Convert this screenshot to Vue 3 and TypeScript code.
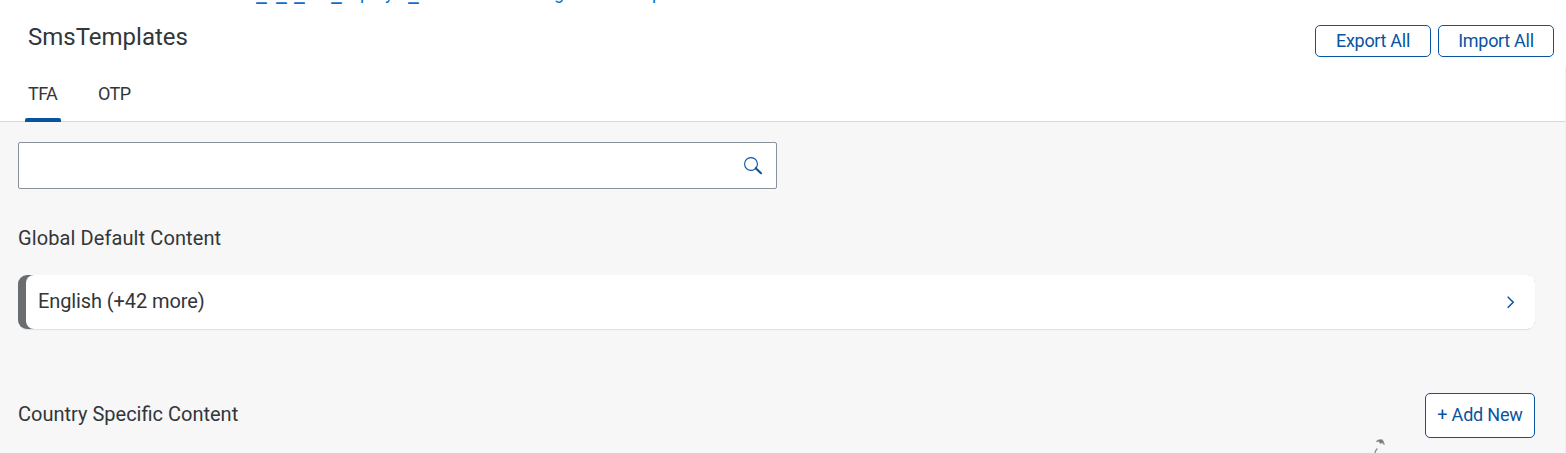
<script setup lang="ts">
import { ref } from 'vue'

const tabs: string[] = ['TFA', 'OTP']
const activeTab = ref<string>('TFA')
const query = ref<string>('')
</script>

<template>
  <main class="page">
    <header class="header">
      <svg class="crumb" width="700" height="8" viewBox="0 0 700 8">
        <text class="marks" y="1.7" x="256 276 294 331 408">_____</text>
        <text y="-1" x="360 385 554 652">pygp</text>
      </svg>
      <div class="title-row">
        <h1><span>SmsTemplates</span></h1>
        <div class="actions">
          <button class="btn"><span>Export All</span></button>
          <button class="btn"><span>Import All</span></button>
        </div>
      </div>
      <nav class="tabs">
        <button
          v-for="tab in tabs"
          :key="tab"
          class="tab"
          :class="{ active: tab === activeTab }"
          @click="activeTab = tab"
        >
          {{ tab }}
        </button>
      </nav>
    </header>
    <section class="content">
      <label class="search">
        <input v-model="query" type="text" aria-label="Search" />
        <svg width="20" height="20" viewBox="0 0 20 20">
          <circle cx="8" cy="8" r="6.4" fill="none" stroke="#0854a0" stroke-width="1.1" />
          <path d="M12.7 12.2L18 17.2" stroke="#0854a0" stroke-width="2.1" fill="none" stroke-linecap="round" />
        </svg>
      </label>
      <h2 class="global"><span>Global Default Content</span></h2>
      <div class="bar">
        <div class="card">
          <span>English (+42 more)</span>
          <svg width="10" height="14" viewBox="0 0 10 14">
            <path d="M1.7 1.8L7.2 7.3L1.7 12.8" stroke="#0854a0" stroke-width="1.5" fill="none" />
          </svg>
        </div>
      </div>
      <div class="country">
        <h2><span>Country Specific Content</span></h2>
        <button class="btn add"><span>+ Add New</span></button>
      </div>
      <svg class="pointer" width="14" height="16" viewBox="0 0 14 16">
        <path d="M2 3.6L4 2L8 1.5L9.5 3.5L10.4 7L8 4.6L6.6 5.8L5 3.6Z" fill="#777" stroke="#999" stroke-width=".7" />
        <path d="M3.4 10.5Q1.5 12 1 15" fill="none" stroke="#888" stroke-width="1.3" />
      </svg>
    </section>
    <div class="edge"></div>
  </main>
</template>

<style>
body {
  overflow: hidden;
}
</style>

<style scoped>
* {
  box-sizing: border-box;
}
.page {
  width: 1566px;
  height: 453px;
  overflow: hidden;
  position: relative;
  background: #f7f7f7;
  color: #32363a;
  font-family: Roboto, "Liberation Sans", sans-serif;
  display: flex;
  flex-direction: column;
}
h1,
h2 {
  margin: 0;
  font-weight: 400;
}
span {
  white-space: nowrap;
}
.header {
  height: 122px;
  flex: none;
  background: #fff;
  border-bottom: 1px solid #d9d9d9;
}
.crumb {
  display: block;
  font-size: 18px;
  fill: #0a6ed1;
}
.marks {
  font-size: 24px;
}
.title-row {
  display: flex;
  justify-content: space-between;
  height: 58px;
  padding: 0 12px 0 28px;
}
h1 {
  font-size: 24px;
  line-height: 28px;
  padding-top: 15px;
}
.actions {
  display: flex;
  gap: 7px;
  padding-top: 17px;
}
button {
  font-family: inherit;
}
.btn {
  display: flex;
  align-items: center;
  justify-content: center;
  width: 116px;
  height: 32px;
  padding: 0 0 2px;
  background: #fff;
  border: 1px solid #0854a0;
  border-radius: 5px;
  color: #0854a0;
  font-size: 18px;
  letter-spacing: -0.3px;
}
.tabs {
  display: flex;
  gap: 33px;
  padding-left: 25px;
  height: 56px;
}
.tab {
  border: 0;
  background: none;
  padding: 18px 3px 0 4px;
  height: 56px;
  width: 36px;
  font-size: 18px;
  line-height: 20px;
  color: #32363a;
  text-align: left;
  display: flex;
  align-items: flex-start;
  letter-spacing: -0.6px;
}
.tab.active {
  padding-left: 3px;
  background: linear-gradient(#0854a0, #0854a0) no-repeat bottom / 100% 4px;
}
.tab.active {
  position: relative;
  background: none;
}
.tab.active::after {
  content: "";
  position: absolute;
  left: 0;
  right: 0;
  bottom: 0;
  height: 4px;
  border-radius: 2px 2px 0 0;
  background: #0854a0;
}
.content {
  flex: 1;
  padding: 20px 31px 0 18px;
}
.search {
  display: flex;
  align-items: center;
  width: 759px;
  height: 47px;
  background: #fff;
  border: 1px solid #89919a;
  border-radius: 2px;
  padding-right: 13px;
}
.search input {
  flex: 1;
  border: 0;
  outline: 0;
  background: none;
  font-size: 18px;
}
h2 {
  font-size: 20px;
  line-height: 24px;
}
.global {
  margin-top: 37px;
  letter-spacing: 0.1px;
}
.bar {
  height: 54px;
  margin-top: 25px;
  padding-left: 8px;
  border-radius: 9px;
  background: #6a6d70;
  box-shadow: 0 1px 1px rgba(0, 0, 0, 0.1);
}
.card {
  display: flex;
  align-items: center;
  justify-content: space-between;
  height: 54px;
  padding: 0 19px 0 12px;
  background: #fff;
  border-radius: 8px;
  font-size: 20px;
  letter-spacing: -0.1px;
}
.card span {
  padding-bottom: 2px;
}
.country {
  display: flex;
  justify-content: space-between;
  margin-top: 64px;
}
.country h2 {
  padding-top: 9px;
}
.add {
  width: 110px;
  height: 45px;
  letter-spacing: -0.2px;
}
.pointer {
  position: absolute;
  left: 1374px;
  top: 438px;
}
.edge {
  position: absolute;
  top: 67px;
  right: 0;
  bottom: 0;
  width: 1px;
  background: #efefef;
}
</style>
